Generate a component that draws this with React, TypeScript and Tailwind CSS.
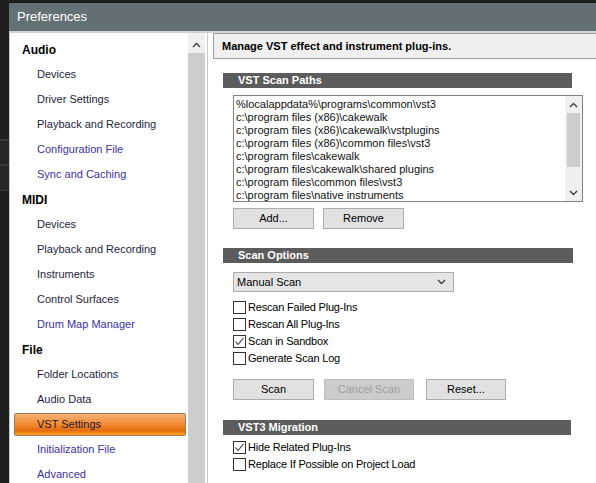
import type { ReactNode } from 'react';

interface NavRow {
  readonly label: string;
  readonly kind: 'head' | 'item' | 'link' | 'active';
}

const NAV_ROWS: readonly NavRow[] = [
  { label: 'Audio', kind: 'head' },
  { label: 'Devices', kind: 'item' },
  { label: 'Driver Settings', kind: 'item' },
  { label: 'Playback and Recording', kind: 'item' },
  { label: 'Configuration File', kind: 'link' },
  { label: 'Sync and Caching', kind: 'link' },
  { label: 'MIDI', kind: 'head' },
  { label: 'Devices', kind: 'item' },
  { label: 'Playback and Recording', kind: 'item' },
  { label: 'Instruments', kind: 'item' },
  { label: 'Control Surfaces', kind: 'item' },
  { label: 'Drum Map Manager', kind: 'link' },
  { label: 'File', kind: 'head' },
  { label: 'Folder Locations', kind: 'item' },
  { label: 'Audio Data', kind: 'item' },
  { label: 'VST Settings', kind: 'active' },
  { label: 'Initialization File', kind: 'link' },
  { label: 'Advanced', kind: 'link' },
];

const SCAN_PATHS = [
  '%localappdata%\\programs\\common\\vst3',
  'c:\\program files (x86)\\cakewalk',
  'c:\\program files (x86)\\cakewalk\\vstplugins',
  'c:\\program files (x86)\\common files\\vst3',
  'c:\\program files\\cakewalk',
  'c:\\program files\\cakewalk\\shared plugins',
  'c:\\program files\\common files\\vst3',
  'c:\\program files\\native instruments',
];

function Chevron({ up }: { readonly up?: boolean }) {
  return (
    <svg width="9" height="6" viewBox="0 0 9 6">
      <polyline
        points={up ? '1,5 4.5,1.5 8,5' : '1,1 4.5,4.5 8,1'}
        fill="none"
        stroke="#404040"
        strokeWidth="1.4"
      />
    </svg>
  );
}

function NavItem({ row }: { readonly row: NavRow }) {
  if (row.kind === 'head') {
    return (
      <div className="h-[25px] flex items-center pl-[12px] font-bold text-[12px] text-black">
        {row.label}
      </div>
    );
  }
  if (row.kind === 'active') {
    return (
      <div className="h-[25px] flex items-center">
        <div className="ml-[4px] w-[172px] h-[23px] flex items-center pl-[22px] rounded-[2px] border border-[#9c7c4c] bg-[linear-gradient(to_bottom,#f6b27c_0%,#f39a4c_30%,#ef8428_55%,#e66c0c_80%,#ffa62a_100%)] text-[#1e1a30]">
          {row.label}
        </div>
      </div>
    );
  }
  return (
    <div
      className={
        row.kind === 'link'
          ? 'h-[25px] flex items-center pl-[27px] text-[#3b31a2]'
          : 'h-[25px] flex items-center pl-[27px] text-[#1e1e3c]'
      }
    >
      {row.label}
    </div>
  );
}

function SectionBar({ title, width }: { readonly title: string; readonly width: string }) {
  return (
    <div className={`h-[15px] bg-[#5c5c5c] flex items-center pl-[15px] text-white font-bold text-[11px] ${width}`}>
      {title}
    </div>
  );
}

function Button({ children, width, disabled }: { readonly children: ReactNode; readonly width: string; readonly disabled?: boolean }) {
  return (
    <div
      className={
        disabled
          ? `h-[21px] ${width} flex items-center justify-center border border-[#bfbfbf] bg-[#cccccc] text-[#a0a0a0]`
          : `h-[21px] ${width} flex items-center justify-center border border-[#adadad] bg-[#e1e1e1] text-black`
      }
    >
      {children}
    </div>
  );
}

function Checkbox({ label, checked }: { readonly label: string; readonly checked?: boolean }) {
  return (
    <div className="h-[17px] flex items-center gap-[2px]">
      <div className="w-[13px] h-[13px] border border-[#333333] bg-white flex items-center justify-center">
        {checked && (
          <svg width="11" height="11" viewBox="0 0 11 11">
            <polyline points="1.5,5.5 4,8.5 9.5,2" fill="none" stroke="#333333" strokeWidth="1.1" />
          </svg>
        )}
      </div>
      <span className="tracking-[-0.2px]">{label}</span>
    </div>
  );
}

function LeftPanel() {
  return (
    <aside className="w-[199px] flex border-l border-[#c4c4c4] bg-white">
      <div className="flex-1 pt-[4px] text-[11px]">
        {NAV_ROWS.map((row, i) => (
          <NavItem key={i} row={row} />
        ))}
      </div>
      <div className="w-[17px] flex flex-col">
        <div className="h-[20px] pt-[4px] bg-[#f0f0f0] flex items-center justify-center">
          <Chevron up />
        </div>
        <div className="flex-1 bg-[#cdcdcd]" />
      </div>
      <div className="w-[3px] bg-white border-r border-[#c8c8c8]" />
    </aside>
  );
}

function ScanPathList() {
  return (
    <div className="mt-[7px] ml-[10px] w-[350px] h-[107px] border border-[#828282] bg-white flex overflow-hidden">
      <div className="flex-1 pl-[2px] pt-[2px] leading-[13px] text-[11px] text-[#111111] whitespace-nowrap">
        {SCAN_PATHS.map((p) => (
          <div key={p}>{p}</div>
        ))}
      </div>
      <div className="w-[17px] flex flex-col items-center bg-[#f0f0f0]">
        <div className="h-[17px] flex items-center justify-center">
          <Chevron up />
        </div>
        <div className="w-[13px] h-[54px] bg-[#cdcdcd]" />
        <div className="flex-1" />
        <div className="h-[17px] flex items-center justify-center">
          <Chevron />
        </div>
      </div>
    </div>
  );
}

function RightPanel() {
  return (
    <main className="flex-1 bg-white text-[11px] text-black">
      <div className="ml-[5px] h-[26px] border border-r-0 border-[#a0a0a0] bg-[#f0f0f0] flex items-center pl-[8px] font-bold">
        Manage VST effect and instrument plug-ins.
      </div>
      <div className="pl-[15px] pt-[14px]">
        <SectionBar title="VST Scan Paths" width="w-[349px]" />
        <ScanPathList />
        <div className="mt-[6px] ml-[10px] flex gap-[9px]">
          <Button width="w-[81px]">Add...</Button>
          <Button width="w-[81px]">Remove</Button>
        </div>

        <div className="mt-[19px]">
          <SectionBar title="Scan Options" width="w-[350px]" />
        </div>
        <div className="mt-[9px] ml-[10px] w-[221px] h-[20px] border border-[#acacac] bg-[#e5e5e5] flex items-center justify-between pl-[3px] pr-[7px]">
          <span>Manual Scan</span>
          <Chevron />
        </div>
        <div className="ml-[10px] mt-[7px]">
          <Checkbox label="Rescan Failed Plug-Ins" />
          <Checkbox label="Rescan All Plug-Ins" />
          <Checkbox label="Scan in Sandbox" checked />
          <Checkbox label="Generate Scan Log" />
        </div>
        <div className="mt-[12px] ml-[10px] flex">
          <Button width="w-[81px]">Scan</Button>
          <div className="ml-[10px]">
            <Button width="w-[90px]" disabled>Cancel Scan</Button>
          </div>
          <div className="ml-[12px]">
            <Button width="w-[80px]">Reset...</Button>
          </div>
        </div>

        <div className="mt-[20px]">
          <SectionBar title="VST3 Migration" width="w-[348px]" />
        </div>
        <div className="ml-[10px] mt-[4px]">
          <Checkbox label="Hide Related Plug-Ins" checked />
          <Checkbox label="Replace If Possible on Project Load" />
        </div>
      </div>
    </main>
  );
}

export default function App() {
  return (
    <div className="w-[596px] h-[483px] flex bg-[#1e1e1e] overflow-hidden font-['Liberation_Sans',Arial,sans-serif]">
      <div className="w-[9px] shrink-0 flex flex-col">
        <div className="h-[139px] shrink-0" />
        <div className="h-[2px] shrink-0 bg-[#3a3a3a]" />
        <div className="h-[23px] shrink-0 bg-[#262626]" />
        <div className="h-[2px] shrink-0 bg-[#3a3a3a]" />
        <div className="h-[24px] shrink-0 bg-[#262626]" />
        <div className="h-[1px] shrink-0 bg-[#3a3a3a]" />
      </div>
      <div className="flex-1 flex flex-col pt-[3px] min-h-0">
        <header className="h-[28px] shrink-0 bg-[#637174] flex items-center pl-[8px] text-white text-[13px]">
          Preferences
        </header>
        <div className="h-[2px] shrink-0 bg-[#cdd2d3]" />
        <div className="flex-1 min-h-0 overflow-hidden flex">
          <LeftPanel />
          <RightPanel />
        </div>
      </div>
    </div>
  );
}
